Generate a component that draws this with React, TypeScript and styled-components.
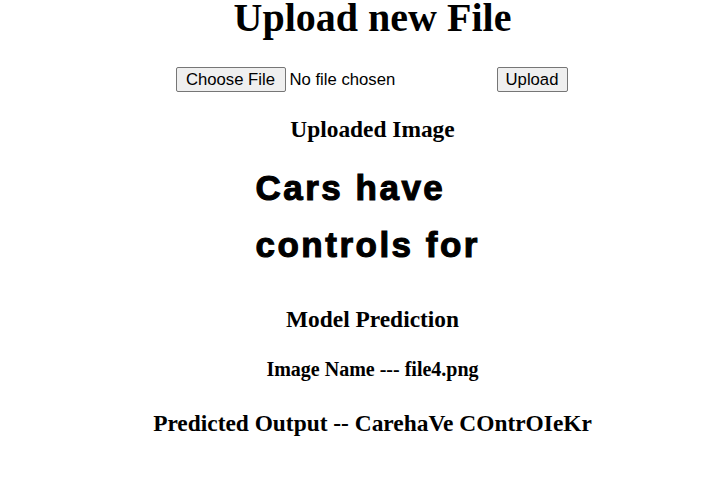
import styled, { createGlobalStyle } from "styled-components";

const GlobalStyle = createGlobalStyle`
    body {
        margin: 0;
        background: #ffffff;
        color: #000000;
        font-family: "Liberation Serif", "Times New Roman", serif;
    }
`;

const Page = styled.div`
    padding-left: 18px;
    text-align: center;
`;

const Title = styled.h1`
    font-size: 40px;
    line-height: 32px;
    font-weight: bold;
    margin: 0;
    padding-top: 2px;
`;

const UploadForm = styled.form`
    display: flex;
    justify-content: center;
    align-items: center;
    margin-top: 33px;
    margin-left: -2px;
    font-family: "Liberation Sans", Arial, sans-serif;
    font-size: 16.7px;
`;

const FilePicker = styled.label`
    width: 321px;
    display: flex;
    align-items: center;
    gap: 4px;
    text-align: left;
`;

const Button = styled.button<{ $width: number }>`
    width: ${(p) => p.$width}px;
    height: 25px;
    padding: 0;
    background: #efefef;
    border: 1px solid #767676;
    border-radius: 2px;
    font-family: inherit;
    font-size: 16.7px;
    color: #000000;
`;

const Heading = styled.h3<{ $top: number }>`
    font-size: 23.4px;
    line-height: 27px;
    font-weight: bold;
    margin: ${(p) => p.$top}px 0 0;
`;

const SubHeading = styled.h4<{ $top: number }>`
    font-size: 20px;
    line-height: 23px;
    font-weight: bold;
    margin: ${(p) => p.$top}px 0 0;
`;

const ImageBox = styled.div`
    width: 234px;
    margin: 16px auto 0;
    text-align: left;
    font-family: "Liberation Sans", Arial, sans-serif;
    font-weight: bold;
    font-size: 35px;
    line-height: 57px;
    letter-spacing: 2.5px;
    -webkit-text-stroke: 1.1px #000000;
`;

export default function App() {
    return (
        <>
            <GlobalStyle />
            <Page>
                <Title>Upload new File</Title>
                <UploadForm onSubmit={(e) => e.preventDefault()}>
                    <FilePicker>
                        <Button type="button" $width={110}>Choose File</Button>
                        <span>No file chosen</span>
                    </FilePicker>
                    <Button type="submit" $width={71}>Upload</Button>
                </UploadForm>
                <Heading $top={24}>Uploaded Image</Heading>
                <ImageBox>
                    Cars have
                    <br />
                    controls for
                </ImageBox>
                <Heading $top={33}>Model Prediction</Heading>
                <SubHeading $top={25}>Image Name --- file4.png</SubHeading>
                <Heading $top={29}>Predicted Output -- CarehaVe COntrOIeKr</Heading>
            </Page>
        </>
    );
}
